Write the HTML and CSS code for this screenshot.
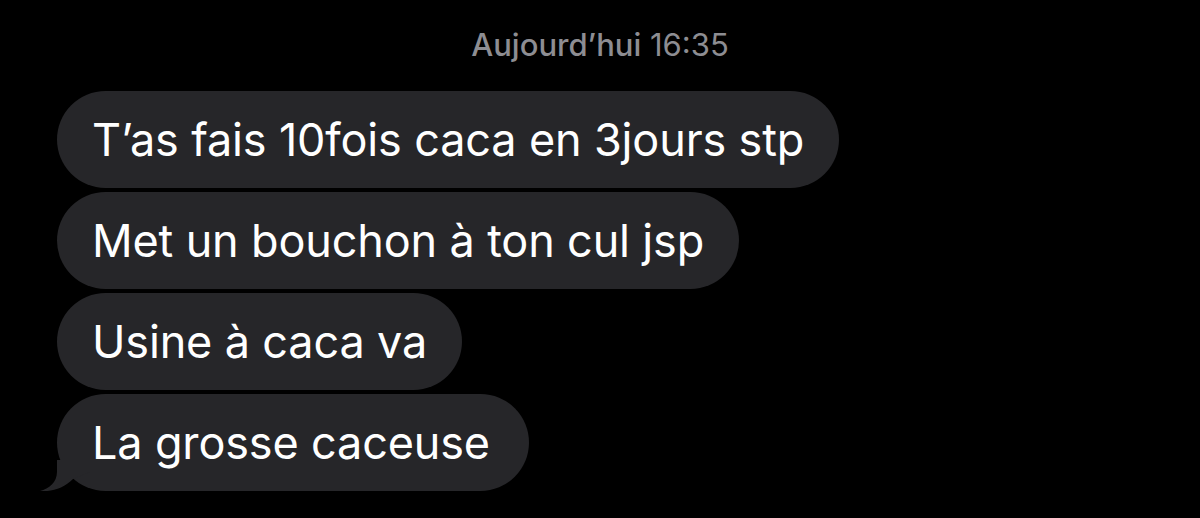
FILE: index.html
```html
<!DOCTYPE html>
<html lang="fr">
<head>
  <meta charset="UTF-8">
  <title>Messages</title>
  <link rel="stylesheet" href="styles.css">
</head>
<body>
  <div class="thread">
    <p class="stamp"><b>Aujourd’hui</b> 16:35</p>

    <div class="bubble">T’as fais 10fois caca en 3jours stp</div>
    <div class="bubble">Met un bouchon à ton cul jsp</div>
    <div class="bubble">Usine à caca va</div>
    <div class="bubble last">
      La grosse caceuse
      <svg class="tail" width="50" height="32" viewBox="0 0 50 32">
        <path d="M17 0 L17 12 C17 22 9 29 0 31 C12 32 24 28 33 19 L50 12 L50 0 Z" fill="#262629"/>
      </svg>
    </div>
  </div>
</body>
</html>
```

FILE: styles.css
```css
body {
  margin: 0;
  background: #000;
  font-family: Inter, "Liberation Sans", sans-serif;
  color: #fff;
}

.thread {
  display: flex;
  flex-direction: column;
  align-items: flex-start;
  gap: 4px;
  padding: 0 0 0 57px;
}

.stamp {
  align-self: stretch;
  margin: 26px 57px 23px 0;
  text-align: center;
  font-size: 31px;
  line-height: 38px;
  color: #8d8d92;
}

.stamp b {
  font-weight: 500;
}

.bubble {
  position: relative;
  background: #262629;
  border-radius: 49px;
  padding: 20px 35px;
  font-size: 45px;
  line-height: 57px;
  letter-spacing: -0.15px;
}

.bubble.last {
  padding-right: 39px;
}

.tail {
  position: absolute;
  left: -17px;
  bottom: -1px;
}
```
